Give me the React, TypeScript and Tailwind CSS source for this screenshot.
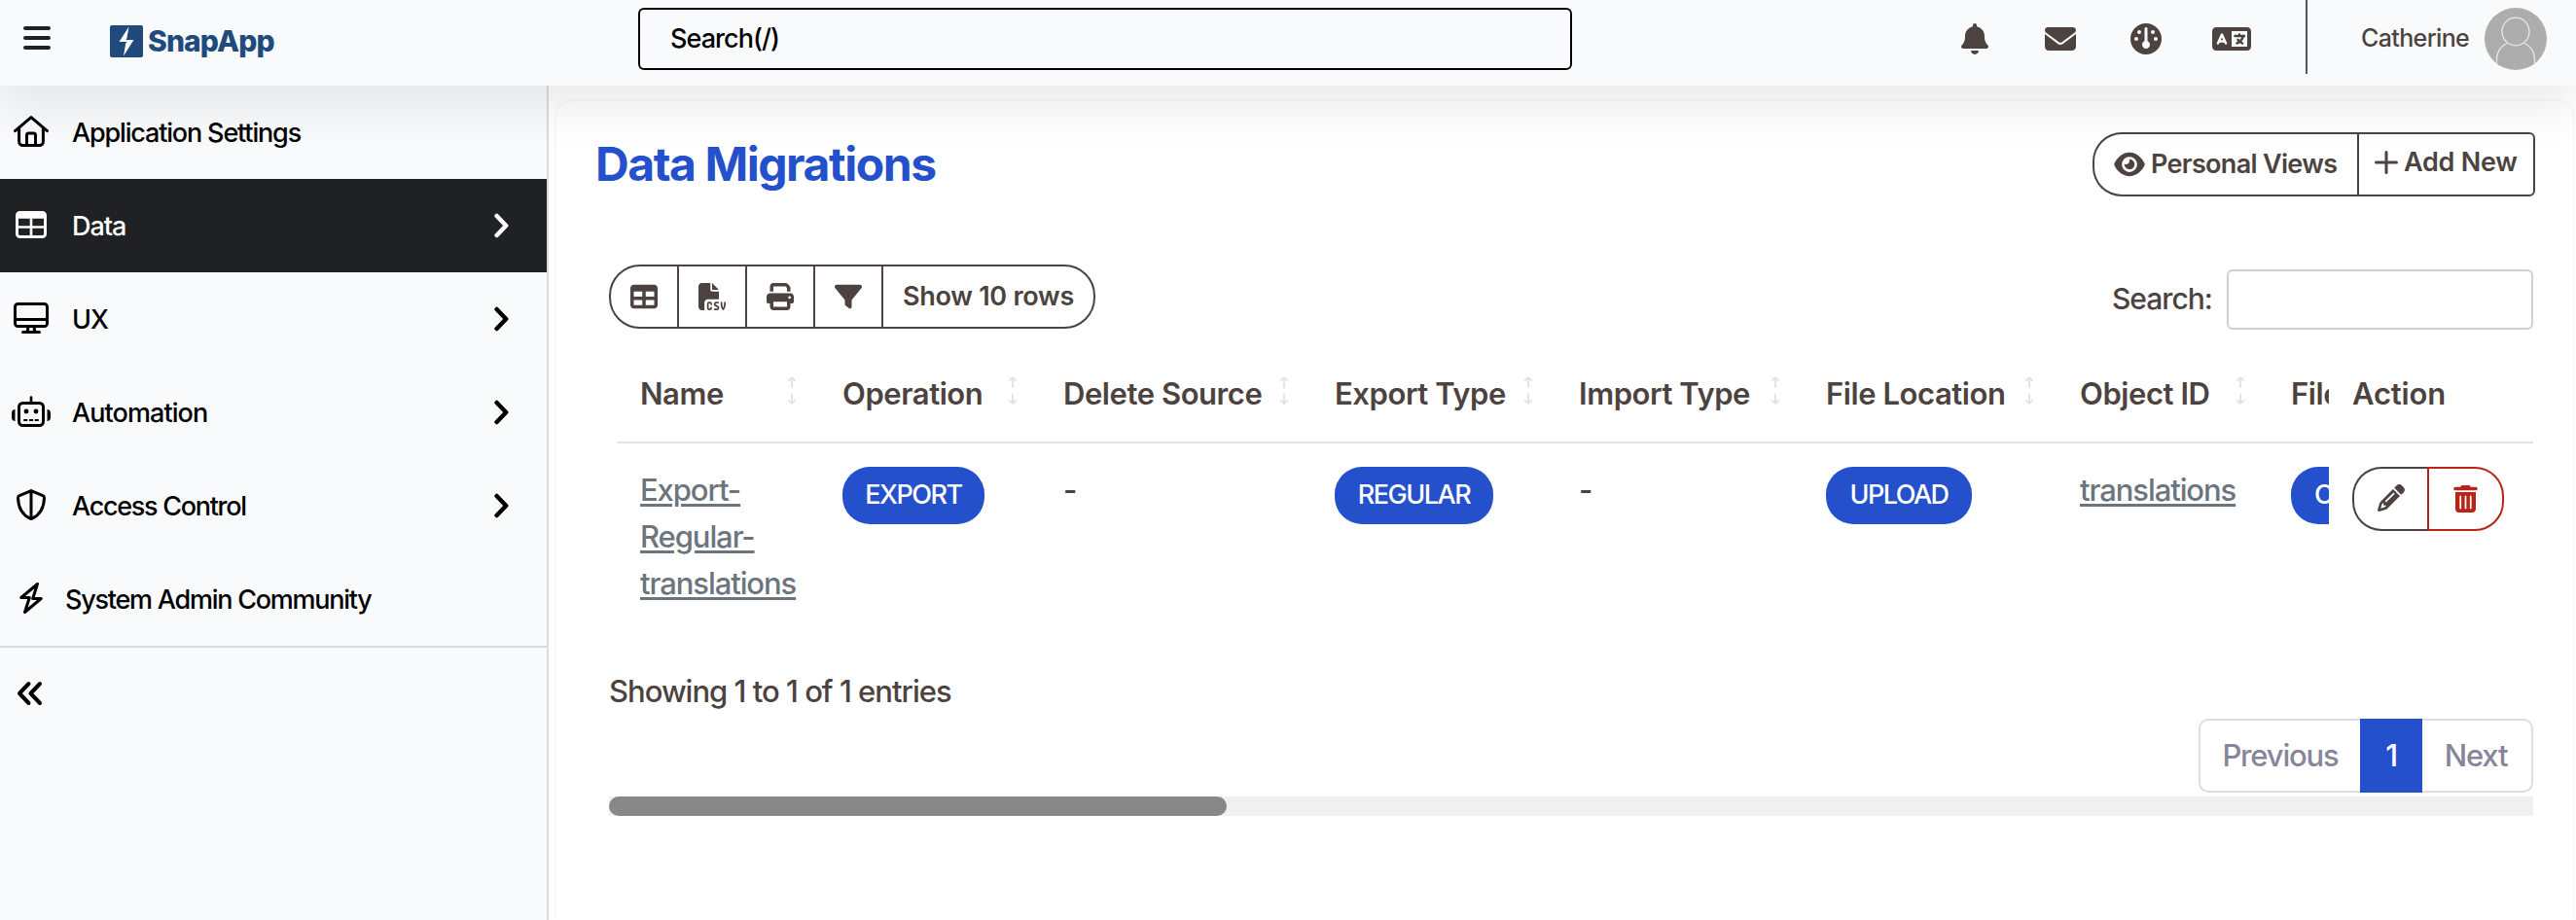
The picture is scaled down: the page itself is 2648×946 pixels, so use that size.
import React from "react";
import { twMerge } from "tailwind-merge";
import {
    FaBars,
    FaBell,
    FaEnvelope,
    FaEye,
    FaFileCsv,
    FaFilter,
    FaGauge,
    FaLanguage,
    FaPencil,
    FaPrint,
    FaTable,
    FaTrashCan,
} from "react-icons/fa6";

// Sidebar icons share the same stroke settings
const stroke = {
    fill: "none",
    stroke: "currentColor",
    strokeWidth: 3,
    strokeLinecap: "round" as const,
    strokeLinejoin: "round" as const,
};

const HouseIcon = () => (
    <svg width="36" height="32" viewBox="0 0 36 32" {...stroke}>
        <path d="M1.5 15.6 18 1.6l16.5 14" />
        <path d="M5.6 12.5v14a4 4 0 0 0 4 4h16.8a4 4 0 0 0 4-4v-14" />
        <path d="M13.5 30V20a2 2 0 0 1 2-2h5a2 2 0 0 1 2 2v10" />
    </svg>
);

const TableIcon = () => (
    <svg width="32" height="28" viewBox="0 0 32 28" {...stroke}>
        <rect x="1.5" y="1.5" width="29" height="25" rx="3" />
        <path d="M2 3h28v4H2z" fill="currentColor" strokeWidth="1.5" />
        <path d="M16 8v18M2 16.5h28" strokeWidth="2.6" />
    </svg>
);

const DesktopIcon = () => (
    <svg width="36" height="32" viewBox="0 0 36 32" {...stroke}>
        <rect x="1.5" y="1.5" width="33" height="23" rx="3" />
        <path d="M2 17.5h32M15 25l-.7 5M21 25l.7 5M9.5 30.5h17" />
    </svg>
);

const RobotIcon = () => (
    <svg width="40" height="32" viewBox="0 0 40 32" {...stroke}>
        <path d="M20 1.5v5" strokeWidth="2.6" />
        <rect x="7.5" y="7.5" width="25" height="23" rx="4" />
        <path d="M3.5 14v12C1.5 26 0 24.5 0 22.5v-5C0 15.5 1.5 14 3.5 14zM36.5 14v12c2 0 3.5-1.5 3.5-3.5v-5c0-2-1.5-3.5-3.5-3.5z" fill="currentColor" stroke="none" />
        <circle cx="15" cy="16" r="2.4" fill="currentColor" stroke="none" />
        <circle cx="25" cy="16" r="2.4" fill="currentColor" stroke="none" />
        <path d="M13 25h2.5M18.8 25h2.5M24.5 25h2.5" strokeWidth="2" />
    </svg>
);

const ShieldIcon = () => (
    <svg width="30" height="32" viewBox="0 0 30 32" {...stroke}>
        <path d="M15 1.6 27 6.6c1 .4 1.5 1.2 1.5 2.2C28.3 17 25 26 16 30.2a2.4 2.4 0 0 1-2 0C5 26 1.7 17 1.5 8.8c0-1 .5-1.8 1.5-2.2z" />
        <path d="M15 2v28" />
    </svg>
);

const BoltIcon = () => (
    <svg width="24" height="32" viewBox="0 0 24 32" {...stroke}>
        <path d="M18.5 1.5 1.8 15.5h8.5L5.5 30.5 22.2 16.5h-8.5z" />
    </svg>
);

const ChevronIcon = () => (
    <svg width="15" height="26" viewBox="0 0 15 26" {...stroke} strokeWidth="4.5">
        <path d="m2.6 3 9.6 10-9.6 10" />
    </svg>
);

const SortIcon = () => (
    <svg width="8" height="29" viewBox="0 0 8 29" className="text-[#e4e4e4]" {...stroke} strokeWidth="2">
        <path d="M4 11V1.5M1 4l3-2.8L7 4M4 18.5V28M1 25l3 2.8L7 25" />
    </svg>
);

interface NavItem {
    label: string;
    icon: React.ReactNode;
    active?: boolean;
    arrow?: boolean;
    className?: string;
}

const navItems: NavItem[] = [
    { label: "Application Settings", icon: <HouseIcon />, className: "tracking-[-0.043em]" },
    { label: "Data", icon: <TableIcon />, active: true, arrow: true },
    { label: "UX", icon: <DesktopIcon />, arrow: true },
    { label: "Automation", icon: <RobotIcon />, arrow: true, className: "tracking-[-0.034em]" },
    { label: "Access Control", icon: <ShieldIcon />, arrow: true, className: "tracking-[-0.048em]" },
    { label: "System Admin Community", icon: <BoltIcon />, className: "ml-[15px] tracking-[-0.046em]" },
];

const Header: React.FC = () => (
    <header className="relative z-10 flex h-22 items-start bg-[#f8fafc] text-[#4c4341] shadow-[0_24px_48px_rgba(0,0,0,0.08)]">
        <button className="mt-[23px] ml-6 text-[#202124]">
            <FaBars className="h-8 w-7" />
        </button>
        {/* Logo */}
        <div className="mt-[26px] ml-[61px] flex w-[543px] items-center gap-[5px] text-[#204a7c]">
            <svg width="34" height="33" viewBox="0 0 34 33">
                <rect width="34" height="33" rx="2" fill="currentColor" />
                <path d="M19.5 1.5 9.5 17h7L14 31.5 24.5 15h-7.5z" fill="#fff" />
                <path d="M10 17.5h7.5M16.5 14.6H24" stroke="#204a7c" strokeWidth=".8" />
            </svg>
            <span className="-mt-0.5 text-[30px] leading-8 font-extrabold tracking-[-0.03em]">SnapApp</span>
        </div>
        <div className="mt-2 flex h-16 w-[960px] items-center rounded-md border-2 border-black pl-[31px] text-[27px] font-[450] tracking-[-0.035em] text-black">
            <span>Search(/)</span>
        </div>
        {/* Header actions */}
        <div className="mt-6 ml-[400px] flex items-center">
            <FaBell className="h-8 w-7" />
            <FaEnvelope className="ml-[58px] size-8" />
            <FaGauge className="ml-[56px] size-8" />
            <FaLanguage className="ml-[52px] h-8 w-10" />
        </div>
        <div className="ml-14 h-[76px] w-0.5 bg-[#585563]" />
        <div className="mt-2 ml-[55px] flex h-16 items-center">
            <span className="w-[127px] text-[25px] font-[450] tracking-[-0.025em]">Catherine</span>
            <svg width="64" height="64" viewBox="0 0 64 64">
                <circle cx="32" cy="32" r="32" fill="#adadad" />
                <g fill="none" stroke="#e9e9e9" strokeWidth="1.3">
                    <ellipse cx="32" cy="24.5" rx="14" ry="14.3" />
                    <path d="M23 36.5C15.5 40 12 48 12.5 57M41 36.5c7.5 3.5 11 11.5 10.5 20.5" />
                </g>
            </svg>
        </div>
    </header>
);

const Sidebar: React.FC = () => (
    <aside className="w-[564px] shrink-0 border-r-2 border-[#dadbdd] bg-[#f8fafc] text-black">
        <nav className="border-b-2 border-[#dadbdd]">
            {navItems.map((item) => (
                <a
                    key={item.label}
                    className={twMerge(
                        "flex h-24 items-center pr-[39px] pl-3",
                        item.active && "bg-[#202124] text-white"
                    )}
                >
                    <span className="mb-0.5 flex w-10 justify-center">{item.icon}</span>
                    <span className={twMerge("mt-[3px] ml-[22px] flex-1 text-[27px] font-[450] tracking-[-0.038em]", item.className)}>
                        {item.label}
                    </span>
                    {item.arrow && <ChevronIcon />}
                </a>
            ))}
        </nav>
        {/* Collapse toggle */}
        <button className="mt-[34px] ml-[17px] block">
            <svg width="27" height="26" viewBox="0 0 27 26" {...stroke} strokeWidth="4">
                <path d="M12.5 3 3 13l9.5 10M24 3l-9.5 10L24 23" />
            </svg>
        </button>
    </aside>
);

interface PillProps {
    children: React.ReactNode;
    className?: string;
}

const Pill: React.FC<PillProps> = ({ children, className }) => (
    <span
        className={twMerge(
            "flex h-[59px] items-center justify-center rounded-[28px] bg-[#2550cc] pb-0.5 text-[27px] font-[450] tracking-[-0.055em] text-white",
            className
        )}
    >
        {children}
    </span>
);

const columns = [
    "Name",
    "Operation",
    "Delete Source",
    "Export Type",
    "Import Type",
    "File Location",
    "Object ID",
    "File",
];

const gridCols = "grid grid-cols-[208px_227px_279px_251px_254px_261px_217px_200px]";

const Table: React.FC = () => (
    <div className="ml-2 flex text-[31px] tracking-[-0.035em]">
        <div className="w-[1760px] overflow-hidden">
            <div className={twMerge(gridCols, "h-[118px] w-[1897px] border-b-2 border-[#dfe3ec] pt-[19px] font-semibold tracking-[-0.014em]")}>
                {columns.map((column) => (
                    <div key={column} className="flex items-center justify-between px-6 whitespace-nowrap">
                        {column}
                        <span className="mb-2">
                            <SortIcon />
                        </span>
                    </div>
                ))}
            </div>
            <div className={twMerge(gridCols, "h-[231px] w-[1897px] items-start pt-6 leading-[48px] *:px-6")}>
                <div>
                    <a className="text-[#6c757d] underline decoration-[3px] underline-offset-[3px]">
                        Export-
                        <br />
                        Regular-
                        <br />
                        translations
                    </a>
                </div>
                <div>
                    <Pill className="w-[146px]">EXPORT</Pill>
                </div>
                <div>-</div>
                <div>
                    <Pill className="w-[163px]">REGULAR</Pill>
                </div>
                <div>-</div>
                <div>
                    <Pill className="w-[150px]">UPLOAD</Pill>
                </div>
                <div>
                    <a className="text-[#6c757d] underline decoration-[3px] underline-offset-[3px]">translations</a>
                </div>
                <div>
                    <Pill className="w-[150px] justify-start pl-6">CSV</Pill>
                </div>
            </div>
        </div>
        {/* Pinned action column */}
        <div className="w-[210px]">
            <div className="flex h-[118px] items-center border-b-2 border-[#dfe3ec] pt-[19px] pl-6 font-semibold tracking-[-0.005em]">
                Action
            </div>
            <div className="flex pt-6 pl-6">
                <button className="flex h-[66px] w-[77px] items-center justify-center rounded-l-[30px] border-2 border-r-0 border-[#4c4341]">
                    <FaPencil className="mb-0.5 size-7" />
                </button>
                <button className="flex h-[66px] w-[79px] items-center justify-center rounded-r-[30px] border-2 border-[#b72418] text-[#b72418]">
                    <FaTrashCan className="h-7 w-[25px]" />
                </button>
            </div>
        </div>
    </div>
);

const Toolbar: React.FC = () => (
    <div className="flex h-[66px] justify-between">
        <div className="flex h-[66px] w-[500px] divide-x-2 divide-[#4c4341] rounded-[32px] border-2 border-[#4c4341] *:flex *:items-center *:justify-center">
            <button className="w-[70px]">
                <FaTable className="size-7" />
            </button>
            <button className="w-[70px]">
                <FaFileCsv className="size-7" />
            </button>
            <button className="w-[70px]">
                <FaPrint className="size-7" />
            </button>
            <button className="w-[70px]">
                <FaFilter className="size-7" />
            </button>
            <button className="flex-1 text-[27px] font-semibold tracking-[-0.01em]">Show 10 rows</button>
        </div>
        <label className="mt-[5px] flex h-[62px] items-center gap-[15px] text-[30px] font-[450] tracking-[-0.032em]">
            <span className="-mt-0.5">Search:</span>
            <input className="h-[62px] w-[315px] rounded-md border-2 border-[#cdd0df]" />
        </label>
    </div>
);

const App: React.FC = () => {
    return (
        <div className="flex h-[946px] w-[2648px] flex-col overflow-hidden bg-white font-['Inter',sans-serif] font-[450] text-[#4c4341]">
            <Header />
            <div className="flex flex-1">
                <Sidebar />
                <main className="mt-4 mr-[3px] ml-2 flex-1 rounded-t-2xl pt-8 pr-[41px] pl-[54px] shadow-[0_0_4px_rgba(0,0,0,0.07)]">
                    <div className="-mr-0.5 -ml-3.5 flex items-center justify-between">
                        <h1 className="text-[48px] leading-[66px] font-bold tracking-[-0.03em] text-[#2550cc]">
                            Data Migrations
                        </h1>
                        <div className="flex h-[66px] text-[27px] font-semibold tracking-[-0.01em]">
                            <button className="flex w-[272px] items-center rounded-l-[30px] border-2 border-r-0 border-[#4c4341] pl-5">
                                <FaEye className="h-7 w-8" />
                                <span className="ml-1.5 whitespace-nowrap tracking-[-0.025em]">Personal Views</span>
                            </button>
                            <button className="flex w-[183px] items-center rounded-r-md border-2 border-[#4c4341] pb-1 pl-4">
                                <svg width="24" height="24" viewBox="0 0 24 24" {...stroke}>
                                    <path d="M12 1.5v21M1.5 12h21" />
                                </svg>
                                <span className="ml-1.5 whitespace-nowrap">Add New</span>
                            </button>
                        </div>
                    </div>
                    <div className="mt-[70px]">
                        <Toolbar />
                        <Table />
                        <p className="text-[31px] leading-[48px] tracking-[-0.032em]">Showing 1 to 1 of 1 entries</p>
                        {/* Pagination */}
                        <div className="mt-1 ml-auto flex h-[76px] w-[344px] text-[31px] tracking-[-0.038em] text-[#86869a] *:flex *:items-center *:justify-center">
                            <button className="w-[166px] rounded-l-[10px] border-2 border-r-0 border-[#dddceb]">Previous</button>
                            <button className="w-16 bg-[#2550cc] font-medium text-white">1</button>
                            <button className="flex-1 rounded-r-[10px] border-2 border-l-0 border-[#dddceb] pr-0.5">Next</button>
                        </div>
                        <div className="mt-1 h-5 bg-[#f0f0f0]">
                            <div className="h-5 w-[635px] rounded-[10px] bg-[#888]" />
                        </div>
                    </div>
                </main>
            </div>
        </div>
    );
};

export default App;
